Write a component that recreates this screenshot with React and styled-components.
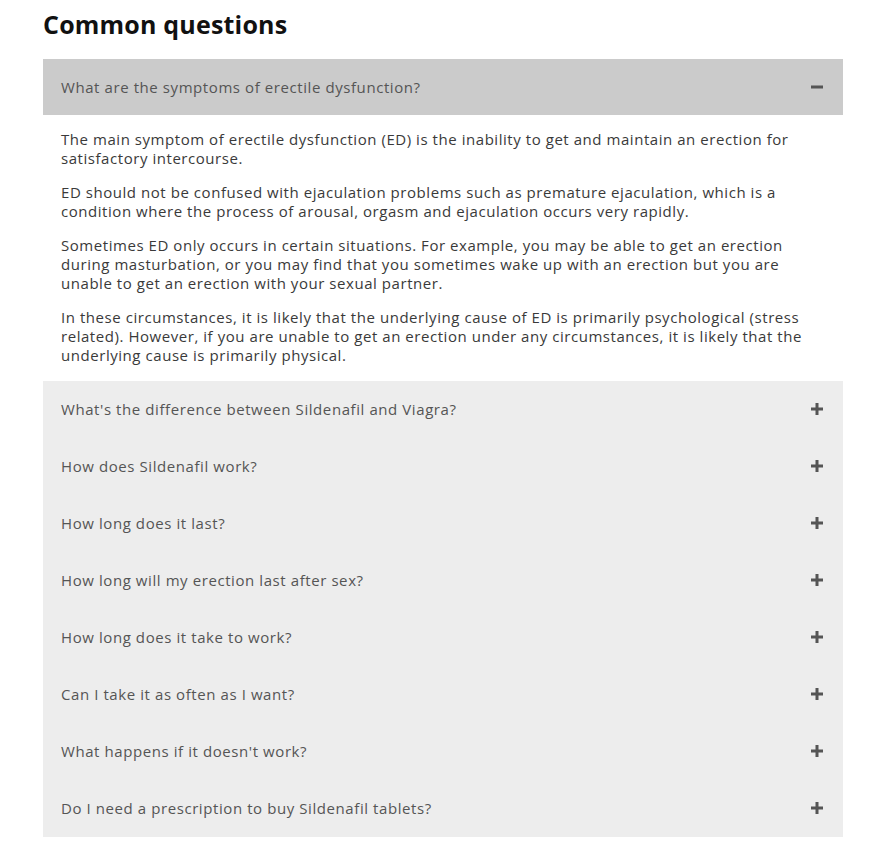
import { useState } from 'react'
import styled, { createGlobalStyle } from 'styled-components'

const GlobalStyle = createGlobalStyle`
  body {
    margin: 0;
    background: #fff;
    font-family: 'Open Sans', 'Liberation Sans', sans-serif;
  }
`

const Wrapper = styled.section`
  margin: 0 40px 0 43px;
  width: 800px;
`

const Title = styled.h2`
  color: #111;
  font-size: 25px;
  font-weight: 700;
  letter-spacing: 0.2px;
  line-height: 30px;
  margin: 9px 0 20px;
`

const List = styled.div`
  display: flex;
  flex-direction: column;
`

const Header = styled.button`
  align-items: center;
  background: ${({ $open }) => ($open ? '#cbcbcb' : '#ededed')};
  border: none;
  color: #555;
  cursor: pointer;
  display: flex;
  font-family: inherit;
  font-size: 15px;
  height: ${({ $open }) => ($open ? '56px' : '57px')};
  justify-content: space-between;
  letter-spacing: 0.58px;
  padding: 0 20px 1px 18px;
  text-align: left;
  width: 100%;
`

const Body = styled.div`
  background: #fff;
  color: #3a3a3a;
  font-size: 15px;
  letter-spacing: 0.55px;
  line-height: 19px;
  padding: 15px 40px 16px 18px;

  p {
    margin: 0 0 15px;
  }

  p:last-child {
    margin: 0;
  }
`

const Toggle = ({ open }) => (
  <svg width='12' height='12' viewBox='0 0 12 12' aria-hidden='true'>
    <rect x='0' y='4.5' width='12' height='3' fill='#555' />
    {!open && <rect x='4.5' y='0' width='3' height='12' fill='#555' />}
  </svg>
)

const faqs = [
  {
    q: 'What are the symptoms of erectile dysfunction?',
    a: [
      'The main symptom of erectile dysfunction (ED) is the inability to get and maintain an erection for satisfactory intercourse.',
      'ED should not be confused with ejaculation problems such as premature ejaculation, which is a condition where the process of arousal, orgasm and ejaculation occurs very rapidly.',
      'Sometimes ED only occurs in certain situations. For example, you may be able to get an erection during masturbation, or you may find that you sometimes wake up with an erection but you are unable to get an erection with your sexual partner.',
      'In these circumstances, it is likely that the underlying cause of ED is primarily psychological (stress related). However, if you are unable to get an erection under any circumstances, it is likely that the underlying cause is primarily physical.',
    ],
  },
  { q: "What's the difference between Sildenafil and Viagra?" },
  { q: 'How does Sildenafil work?' },
  { q: 'How long does it last?' },
  { q: 'How long will my erection last after sex?' },
  { q: 'How long does it take to work?' },
  { q: 'Can I take it as often as I want?' },
  { q: "What happens if it doesn't work?" },
  { q: 'Do I need a prescription to buy Sildenafil tablets?' },
]

const App = () => {
  const [openIndex, setOpenIndex] = useState(0)

  return (
    <Wrapper>
      <GlobalStyle />
      <Title>Common questions</Title>
      <List>
        {faqs.map(({ q, a }, i) => {
          const open = openIndex === i
          return (
            <div key={q}>
              <Header $open={open} onClick={() => setOpenIndex(open ? -1 : i)}>
                <span>{q}</span>
                <Toggle open={open} />
              </Header>
              {open && a && (
                <Body>
                  {a.map(text => (
                    <p key={text.slice(0, 20)}>{text}</p>
                  ))}
                </Body>
              )}
            </div>
          )
        })}
      </List>
    </Wrapper>
  )
}

export default App
